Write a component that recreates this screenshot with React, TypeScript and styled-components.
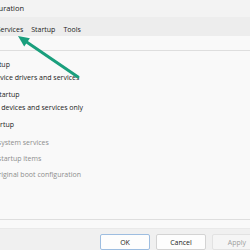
import React from 'react';
import styled, { createGlobalStyle } from 'styled-components';

const GlobalStyle = createGlobalStyle`
  html, body {
    margin: 0;
    padding: 0;
    background: #f0f0f0;
    overflow: hidden;
  }
  body {
    font-family: 'Open Sans', 'Noto Sans', 'Liberation Sans', sans-serif;
    color: #1b1b1b;
  }
`;

const Screen = styled.div`
  position: relative;
  width: 250px;
  height: 250px;
  overflow: hidden;
`;

const Dialog = styled.div`
  display: flex;
  flex-direction: column;
  flex-shrink: 0;
  width: 398px;
  margin-left: -72px;
  background: #f0f0f0;
`;

const TitleBar = styled.div`
  display: flex;
  align-items: center;
  height: 17px;
  padding-left: 21px;
  background: #f3f3f3;
`;

const Title = styled.span`
  font-size: 7.5px;
  line-height: 17px;
  color: #222;
`;

const TabStrip = styled.div`
  display: flex;
  align-items: flex-end;
  height: 19px;
  padding-left: 3.5px;
  background: #ededed;
`;

const Tab = styled.div<{ $active?: boolean }>`
  height: ${(p) => (p.$active ? 15 : 12)}px;
  line-height: ${(p) => (p.$active ? 15 : 12)}px;
  padding: 0 ${(p) => (p.$active ? 6 : 4)}px;
  font-size: 7px;
  color: #1b1b1b;
  background: ${(p) => (p.$active ? '#f9f9f9' : 'transparent')};
`;

const TabPage = styled.div`
  height: 193px;
  box-sizing: border-box;
  padding: 9px 8px 8px;
  background: #f9f9f9;
  border-bottom: 1px solid #e9e9e9;
`;

const GroupBox = styled.fieldset`
  display: flex;
  flex-direction: column;
  gap: 4px;
  height: 100%;
  box-sizing: border-box;
  margin: 0;
  padding: 3px 0 0 10px;
  border: 1px solid #dedede;
  border-radius: 2px;
`;

const Legend = styled.legend`
  margin-left: -7px;
  padding: 0 2px;
  font-size: 7px;
  line-height: 10px;
  color: #1b1b1b;
`;

const Block = styled.div`
  display: flex;
  flex-direction: column;
`;

const OptionRow = styled.label<{ $disabled?: boolean }>`
  display: flex;
  align-items: center;
  gap: 4px;
  height: 13px;
  font-size: 7px;
  white-space: nowrap;
  color: ${(p) => (p.$disabled ? '#8d8d8d' : '#1b1b1b')};
`;

const Radio = styled.span<{ $checked?: boolean }>`
  position: relative;
  width: 9px;
  height: 9px;
  box-sizing: border-box;
  border-radius: 50%;
  border: 1px solid ${(p) => (p.$checked ? '#0067c0' : '#6e6e6e')};
  background: ${(p) => (p.$checked ? '#0067c0' : '#fff')};
  &::after {
    content: '';
    display: ${(p) => (p.$checked ? 'block' : 'none')};
    position: absolute;
    inset: 2px;
    border-radius: 50%;
    background: #fff;
  }
`;

const Hint = styled.div`
  height: 13px;
  line-height: 13px;
  padding-left: 18px;
  font-size: 7px;
  white-space: nowrap;
  color: #1b1b1b;
`;

const CheckList = styled.div`
  display: flex;
  flex-direction: column;
  gap: 3px;
  margin: 1px 0 0 20px;
`;

const CheckBox = styled.span<{ $checked?: boolean }>`
  width: 9px;
  height: 9px;
  box-sizing: border-box;
  border-radius: 2px;
  border: 1px solid #c4c4c4;
  background: ${(p) => (p.$checked ? '#c4c4c4' : '#f4f4f4')};
`;

const Footer = styled.div`
  display: flex;
  justify-content: flex-end;
  gap: 6px;
  padding: 5px 8px 6px;
  background: #f0f0f0;
`;

const Button = styled.button<{ $default?: boolean }>`
  width: 50px;
  height: 16px;
  padding: 0;
  box-sizing: border-box;
  font-family: inherit;
  font-size: 7px;
  color: #1b1b1b;
  background: #fdfdfd;
  border: 1px solid ${(p) => (p.$default ? '#9dbde0' : '#d3d3d3')};
  border-radius: 2px;
  &:disabled {
    color: #9e9e9e;
    background: #f5f5f5;
    border-color: #e2e2e2;
  }
`;

const Pointer = styled.svg`
  position: absolute;
  top: 0;
  left: 0;
  pointer-events: none;
`;

const App = () => {
  return (
    <Screen>
      <GlobalStyle />
      <Dialog>
        <TitleBar>
          <Title>System Configuration</Title>
        </TitleBar>
        <TabStrip>
          <Tab $active>General</Tab>
          <Tab>Boot</Tab>
          <Tab>Services</Tab>
          <Tab>Startup</Tab>
          <Tab>Tools</Tab>
        </TabStrip>
        <TabPage>
          <GroupBox>
            <Legend>Startup selection</Legend>
            <Block>
              <OptionRow>
                <Radio $checked />
                Normal startup
              </OptionRow>
              <Hint>Load all device drivers and services</Hint>
            </Block>
            <Block>
              <OptionRow>
                <Radio />
                Diagnostic startup
              </OptionRow>
              <Hint>Load basic devices and services only</Hint>
            </Block>
            <OptionRow>
              <Radio />
              Selective startup
            </OptionRow>
            <CheckList>
              <OptionRow $disabled>
                <CheckBox $checked />
                Load system services
              </OptionRow>
              <OptionRow $disabled>
                <CheckBox $checked />
                Load startup items
              </OptionRow>
              <OptionRow $disabled>
                <CheckBox $checked />
                Use original boot configuration
              </OptionRow>
            </CheckList>
          </GroupBox>
        </TabPage>
        <Footer>
          <Button $default>OK</Button>
          <Button>Cancel</Button>
          <Button disabled>Apply</Button>
          <Button>Help</Button>
        </Footer>
      </Dialog>
      {/* annotation arrow pointing at the Services tab */}
      <Pointer width="250" height="250" viewBox="0 0 250 250">
        <line x1="78" y1="77" x2="27" y2="42.3" stroke="#1a9f7d" strokeWidth="3" strokeLinecap="round" />
        <polygon points="18,36 29.9,38.2 24.2,46.4" fill="#1a9f7d" />
      </Pointer>
    </Screen>
  );
};

export default App;
